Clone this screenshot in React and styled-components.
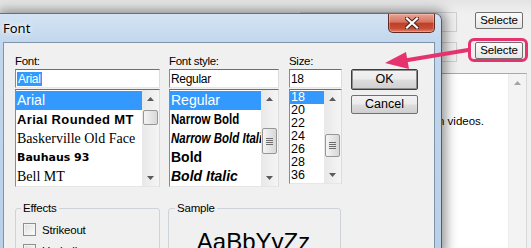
import React from "react"
import styled, { createGlobalStyle } from "styled-components"

const GlobalStyle = createGlobalStyle`
    html, body {
        margin: 0;
        padding: 0;
    }
    body {
        width: 531px;
        height: 248px;
        overflow: hidden;
        background: #f0f0f0;
        font-family: "Liberation Sans", Arial, sans-serif;
        color: #000;
    }
`

const fontList = [
    { name: "Arial", family: '"Liberation Sans", sans-serif', size: 14, selected: true },
    { name: "Arial Rounded MT", family: '"Liberation Sans", sans-serif', size: 13, weight: 700, spacing: 0.35 },
    { name: "Baskerville Old Face", family: '"Liberation Serif", serif', size: 14 },
    { name: "Bauhaus 93", family: '"DejaVu Sans", sans-serif', size: 11, weight: 700 },
    { name: "Bell MT", family: '"Liberation Serif", serif', size: 14 },
]

const styleList = [
    { name: "Regular", size: 14, selected: true },
    { name: "Narrow Bold", size: 14, weight: 700, narrow: true },
    { name: "Narrow Bold Italic", size: 14, weight: 700, italic: true, narrow: true },
    { name: "Bold", size: 14, weight: 700 },
    { name: "Bold Italic", size: 14, weight: 700, italic: true },
]

const sizeList = ["18", "20", "22", "24", "26", "28", "36"]

function ArrowGlyph({ up, color = "#5a5a5a" }) {
    return (
        <svg width="7" height="4" viewBox="0 0 7 4">
            <polygon points={up ? "0,4 3.5,0 7,4" : "0,0 7,0 3.5,4"} fill={color} />
        </svg>
    )
}

function Scrollbar({ offset, height, grip }) {
    return (
        <ScrollTrack>
            <ScrollArrow><ArrowGlyph up /></ScrollArrow>
            <ScrollRail>
                <Thumb $offset={offset} $height={height}>
                    {grip && (
                        <svg width="7" height="7" viewBox="0 0 7 7">
                            <rect x="0" y="0" width="7" height="1" fill="#6d6d6d" />
                            <rect x="0" y="2" width="7" height="1" fill="#6d6d6d" />
                            <rect x="0" y="4" width="7" height="1" fill="#6d6d6d" />
                            <rect x="0" y="6" width="7" height="1" fill="#6d6d6d" />
                        </svg>
                    )}
                </Thumb>
            </ScrollRail>
            <ScrollArrow><ArrowGlyph /></ScrollArrow>
        </ScrollTrack>
    )
}

function App() {
    return (
        <Desktop>
            <GlobalStyle />

            {/* window behind the dialog */}
            <BackWindow>
                <FieldRow>
                    <Field />
                    <SelectButton>Selecte</SelectButton>
                </FieldRow>
                <FieldRow $gap={10}>
                    <Field />
                    <SelectButton>Selecte</SelectButton>
                </FieldRow>
                <Panel>
                    <PanelText>n videos.</PanelText>
                    <PanelScroll>
                        <ScrollArrow><ArrowGlyph up color="#a3a3a3" /></ScrollArrow>
                    </PanelScroll>
                </Panel>
            </BackWindow>

            <Dialog>
                <TitleBar>
                    <Title>Font</Title>
                    <CloseButton>
                        <svg width="14" height="12" viewBox="0 0 14 12">
                            <path d="M2 1.5 L12 10.5 M12 1.5 L2 10.5" stroke="#4a2420" strokeWidth="4.2" strokeLinecap="square" />
                            <path d="M2 1.5 L12 10.5 M12 1.5 L2 10.5" stroke="#fff" strokeWidth="2.2" strokeLinecap="square" />
                        </svg>
                    </CloseButton>
                </TitleBar>

                <Client>
                    <TopRow>
                        <Column $width={145}>
                            <Label>Font:</Label>
                            <TextBox><Selection>Arial</Selection></TextBox>
                            <ListBox>
                                <Items>
                                    {fontList.map(f => (
                                        <Item key={f.name} $selected={f.selected} $height={19}>
                                            <ItemText
                                                $family={f.family}
                                                $size={f.size}
                                                $weight={f.weight}
                                                $spacing={f.spacing}
                                            >
                                                {f.name}
                                            </ItemText>
                                        </Item>
                                    ))}
                                </Items>
                                <Scrollbar offset={3} height={15} />
                            </ListBox>
                        </Column>

                        <Column $width={110} $gap={9}>
                            <Label>Font style:</Label>
                            <TextBox>Regular</TextBox>
                            <ListBox>
                                <Items>
                                    {styleList.map(s => (
                                        <Item key={s.name} $selected={s.selected} $height={19}>
                                            <ItemText
                                                $size={s.size}
                                                $weight={s.weight}
                                                $italic={s.italic}
                                                $narrow={s.narrow}
                                            >
                                                {s.name}
                                            </ItemText>
                                        </Item>
                                    ))}
                                </Items>
                                <Scrollbar offset={21} height={26} grip />
                            </ListBox>
                        </Column>

                        <Column $width={53} $gap={10}>
                            <Label>Size:</Label>
                            <TextBox>18</TextBox>
                            <ListBox $height={95}>
                                <Items>
                                    {sizeList.map((s, i) => (
                                        <Item key={s} $selected={i === 0} $height={13}>
                                            <ItemText $size={12.5}>{s}</ItemText>
                                        </Item>
                                    ))}
                                </Items>
                                <Scrollbar offset={27} height={23} grip />
                            </ListBox>
                        </Column>

                        <ButtonColumn>
                            <DialogButton $default>OK</DialogButton>
                            <DialogButton>Cancel</DialogButton>
                        </ButtonColumn>
                    </TopRow>

                    <BottomRow>
                        <Group $width={145} $pad={5}>
                            <Legend>Effects</Legend>
                            <CheckRow>
                                <CheckBox />
                                <span>Strikeout</span>
                            </CheckRow>
                            <CheckRow>
                                <CheckBox />
                                <span>Underline</span>
                            </CheckRow>
                        </Group>
                        <Group $width={173} $pad={6} $gap={8}>
                            <Legend>Sample</Legend>
                            <SampleText>AaBbYyZz</SampleText>
                        </Group>
                    </BottomRow>
                </Client>
            </Dialog>

            {/* annotation drawn over the screenshot */}
            <Highlight />
            <Pointer>
                <svg width="531" height="248" viewBox="0 0 531 248">
                    <path d="M468 50 L402 61" stroke="#e6336e" strokeWidth="4" strokeLinecap="round" />
                    <polygon points="385,63 406,52 409,69" fill="#e6336e" />
                </svg>
            </Pointer>
        </Desktop>
    )
}

export default App

const Desktop = styled.div`
    position: relative;
    width: 531px;
    height: 248px;
    overflow: hidden;
`

const BackWindow = styled.div`
    display: flex;
    flex-direction: column;
    box-sizing: border-box;
    height: 248px;
    padding: 12px 4px 0 300px;
    background: linear-gradient(#e4e4e4, #f0f0f0 14px);
`

const FieldRow = styled.div`
    display: flex;
    align-items: flex-start;
    gap: 18px;
    margin-top: ${p => p.$gap || 0}px;
    padding-right: 4px;
`

const Field = styled.div`
    flex: 1;
    height: 20px;
    box-sizing: border-box;
    border: 1px solid #cfcfcf;
    background: #f0f0f0;
`

const SelectButton = styled.div`
    width: 48px;
    height: 17px;
    box-sizing: border-box;
    border: 1px solid #707070;
    border-radius: 2px;
    background: linear-gradient(#fbfbfb, #f2f2f2 50%, #e6e6e6);
    font-size: 11.5px;
    line-height: 15px;
    text-align: center;
    letter-spacing: -0.1px;
`

const Panel = styled.div`
    display: flex;
    flex: 1;
    margin-top: 11px;
    border-top: 1px solid #a9a9a9;
    border-right: 1px solid #d9d9d9;
`

const PanelText = styled.div`
    flex: 1;
    background: #fff;
    padding: 40px 0 0 138px;
    font-size: 11.5px;
    line-height: 14px;
    white-space: nowrap;
`

const PanelScroll = styled.div`
    width: 17px;
    background: #f3f3f3;
    border-left: 1px solid #ececec;
`

const Dialog = styled.div`
    position: absolute;
    left: 0;
    top: 13px;
    width: 442px;
    height: 240px;
    box-sizing: border-box;
    display: flex;
    flex-direction: column;
    padding: 0 6px 0 3px;
    border-top: 1px solid #5f7084;
    border-right: 1px solid #4d5f74;
    border-top-right-radius: 7px;
    background: linear-gradient(#d4e3f3, #c2d7ed 28px, #b9d0e9);
    box-shadow: 1px 0 12px 3px rgba(0, 0, 0, 0.42);
`

const TitleBar = styled.div`
    display: flex;
    align-items: flex-start;
    justify-content: space-between;
    height: 28px;
`

const Title = styled.div`
    font-family: "Noto Sans", "Open Sans", sans-serif;
    font-size: 13px;
    line-height: 28px;
    text-shadow: 0 0 8px #fff, 0 0 4px #fff;
`

const CloseButton = styled.div`
    width: 47px;
    height: 19px;
    box-sizing: border-box;
    display: flex;
    align-items: center;
    justify-content: center;
    border: 1px solid #5e2a24;
    border-top: none;
    border-radius: 0 0 5px 5px;
    background: linear-gradient(#eaa597, #d5735f 45%, #bf3f27 52%, #c94c34 80%, #e0836b);
    box-shadow: inset 0 0 0 1px rgba(255, 220, 210, 0.35);
`

const Client = styled.div`
    flex: 1;
    background: #f0f0f0;
    border: 1px solid #8094a9;
    border-bottom: none;
    padding: 11px 0 0 11px;
    font-size: 11.5px;
`

const TopRow = styled.div`
    display: flex;
    align-items: flex-start;
`

const Column = styled.div`
    display: flex;
    flex-direction: column;
    width: ${p => p.$width}px;
    margin-left: ${p => p.$gap || 0}px;
`

const Label = styled.div`
    font-size: 11.5px;
    line-height: 15px;
    letter-spacing: -0.3px;
`

const TextBox = styled.div`
    height: 19px;
    box-sizing: border-box;
    display: flex;
    align-items: center;
    padding: 0 1px;
    background: #fff;
    border: 1px solid;
    border-color: #6f6f6f #dcdcdc #e6e6e6 #8a8a8a;
    font-size: 12px;
    letter-spacing: -0.3px;
`

const Selection = styled.span`
    background: #3399ff;
    color: #fff;
    line-height: 14px;
    padding: 0 1px;
`

const ListBox = styled.div`
    display: flex;
    height: ${p => p.$height || 98}px;
    margin-top: 1px;
    box-sizing: border-box;
    background: #fff;
    border: 1px solid;
    border-color: #6f6f6f #dcdcdc #e6e6e6 #8a8a8a;
`

const Items = styled.div`
    flex: 1;
    min-width: 0;
    padding-top: 1px;
    overflow: hidden;
`

const Item = styled.div`
    height: ${p => p.$height}px;
    line-height: ${p => p.$height}px;
    padding-left: 1px;
    white-space: nowrap;
    overflow: hidden;
    background: ${p => (p.$selected ? "#3399ff" : "transparent")};
    color: ${p => (p.$selected ? "#fff" : "#000")};
`

const ItemText = styled.span`
    display: inline-block;
    font-family: ${p => p.$family || '"Liberation Sans", sans-serif'};
    font-size: ${p => p.$size}px;
    font-weight: ${p => p.$weight || 400};
    font-style: ${p => (p.$italic ? "italic" : "normal")};
    letter-spacing: ${p => p.$spacing || 0}px;
    transform: ${p => (p.$narrow ? "scaleX(0.82)" : "none")};
    transform-origin: left center;
`

const ScrollTrack = styled.div`
    width: 17px;
    display: flex;
    flex-direction: column;
    background: linear-gradient(to right, #e8e8e8, #f5f5f5);
`

const ScrollArrow = styled.div`
    height: 17px;
    display: flex;
    align-items: center;
    justify-content: center;
`

const ScrollRail = styled.div`
    flex: 1;
    padding: 0 1px;
`

const Thumb = styled.div`
    margin-top: ${p => p.$offset}px;
    height: ${p => p.$height}px;
    box-sizing: border-box;
    display: flex;
    align-items: center;
    justify-content: center;
    border: 1px solid #979797;
    border-radius: 2px;
    background: linear-gradient(to right, #f4f4f4, #e6e6e6 50%, #d8d8d8);
`

const ButtonColumn = styled.div`
    display: flex;
    flex-direction: column;
    gap: 5px;
    width: 67px;
    margin-left: 9px;
    padding-top: 15px;
`

const DialogButton = styled.div`
    height: ${p => (p.$default ? 21 : 19)}px;
    box-sizing: border-box;
    border: 1px solid ${p => (p.$default ? "#3c3c3c" : "#707070")};
    box-shadow: ${p => (p.$default ? "inset 0 0 0 1px #8f8f8f" : "none")};
    border-radius: 2px;
    background: linear-gradient(#f2f2f2, #ebebeb 48%, #dddddd 52%, #cfcfcf);
    font-size: 12.5px;
    line-height: ${p => (p.$default ? 19 : 17)}px;
    text-align: center;
`

const BottomRow = styled.div`
    display: flex;
    margin-top: 14px;
`

const Group = styled.fieldset`
    width: ${p => p.$width}px;
    height: 80px;
    box-sizing: border-box;
    margin: 0 0 0 ${p => p.$gap || 0}px;
    padding: 0 4px 0 ${p => p.$pad}px;
    border: 1px solid #cdd3d8;
    border-radius: 3px;
    min-width: 0;
`

const Legend = styled.legend`
    padding: 0 2px;
    font-size: 11.5px;
    line-height: 14px;
    letter-spacing: -0.2px;
`

const CheckRow = styled.div`
    display: flex;
    align-items: center;
    gap: 6px;
    height: 13px;
    margin: 8px 0 0 2px;
    font-size: 11.5px;
    letter-spacing: -0.2px;
`

const CheckBox = styled.div`
    width: 13px;
    height: 13px;
    box-sizing: border-box;
    border: 1px solid #8e8f8f;
    background: linear-gradient(135deg, #dcdcdc, #ffffff);
    box-shadow: inset 0 0 0 1px #f4f4f4;
`

const SampleText = styled.div`
    margin-top: 13px;
    text-align: center;
    font-size: 24px;
    line-height: 28px;
    padding-right: 4px;
`

const Highlight = styled.div`
    position: absolute;
    left: 468px;
    top: 38px;
    width: 60px;
    height: 24px;
    box-sizing: border-box;
    border: 3px solid #e6336e;
    border-radius: 6px;
`

const Pointer = styled.div`
    position: absolute;
    left: 0;
    top: 0;
    pointer-events: none;
`
